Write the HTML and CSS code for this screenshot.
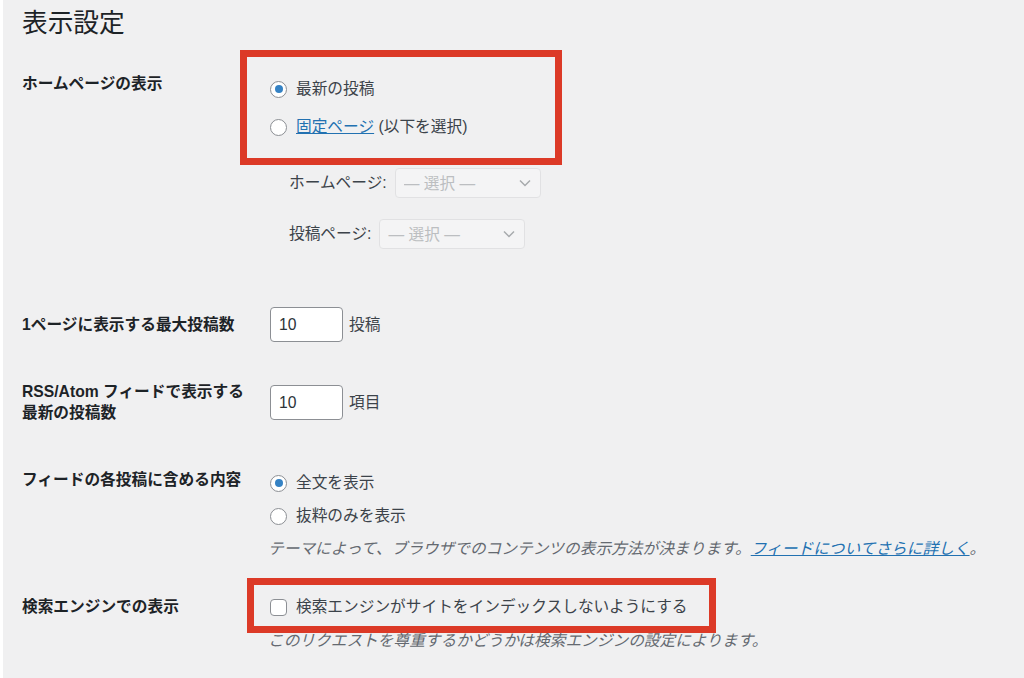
FILE: index.html
```html
<!DOCTYPE html>
<html lang="ja">
<head>
    <meta charset="UTF-8">
    <meta name="viewport" content="width=device-width, initial-scale=1.0">
    <title>表示設定</title>
    <link rel="stylesheet" href="styles.css">
</head>
<body>
    <div class="wrap">
        <h1>表示設定</h1>

        <!-- ホームページの表示 -->
        <div class="form-row row-front">
            <div class="row-label">ホームページの表示</div>
            <div class="row-field">
                <fieldset class="front-choice">
                    <span class="mark-box mark-front"></span>
                    <label class="choice"><input type="radio" name="show_on_front" checked>最新の投稿</label>
                    <label class="choice"><input type="radio" name="show_on_front"><span><a href="#">固定ページ</a> (以下を選択)</span></label>
                </fieldset>
                <ul class="page-pick">
                    <li>
                        <label for="page_on_front">ホームページ:</label>
                        <span class="select-wrap">
                            <select id="page_on_front" disabled><option>— 選択 —</option></select>
                            <svg class="chevron" width="12" height="8" viewBox="0 0 12 8"><path d="M1 1.5l5 5 5-5" fill="none" stroke="#a7aaad" stroke-width="1.5"/></svg>
                        </span>
                    </li>
                    <li>
                        <label for="page_for_posts">投稿ページ:</label>
                        <span class="select-wrap">
                            <select id="page_for_posts" disabled><option>— 選択 —</option></select>
                            <svg class="chevron" width="12" height="8" viewBox="0 0 12 8"><path d="M1 1.5l5 5 5-5" fill="none" stroke="#a7aaad" stroke-width="1.5"/></svg>
                        </span>
                    </li>
                </ul>
            </div>
        </div>

        <!-- 投稿数 -->
        <div class="form-row row-per-page">
            <div class="row-label">1ページに表示する最大投稿数</div>
            <div class="row-field">
                <div class="number-line">
                    <input type="number" class="small-text" value="10"> 投稿
                </div>
            </div>
        </div>

        <div class="form-row row-rss">
            <div class="row-label">RSS/Atom フィードで表示する最新の投稿数</div>
            <div class="row-field">
                <div class="number-line">
                    <input type="number" class="small-text" value="10"> 項目
                </div>
            </div>
        </div>

        <!-- フィード -->
        <div class="form-row row-feed">
            <div class="row-label">フィードの各投稿に含める内容</div>
            <div class="row-field">
                <label class="choice"><input type="radio" name="rss_use_excerpt" checked>全文を表示</label>
                <label class="choice"><input type="radio" name="rss_use_excerpt">抜粋のみを表示</label>
                <p class="description">テーマによって、ブラウザでのコンテンツの表示方法が決まります。<a href="#">フィードについてさらに詳しく</a>。</p>
            </div>
        </div>

        <!-- 検索エンジン -->
        <div class="form-row row-search">
            <div class="row-label">検索エンジンでの表示</div>
            <div class="row-field">
                <span class="mark-box mark-search"></span>
                <label class="choice"><input type="checkbox" name="blog_public">検索エンジンがサイトをインデックスしないようにする</label>
                <p class="description">このリクエストを尊重するかどうかは検索エンジンの設定によります。</p>
            </div>
        </div>
    </div>
</body>
</html>
```

FILE: styles.css
```css
* {
    margin: 0;
    padding: 0;
    box-sizing: border-box;
}

body {
    background-color: #F0F0F1;
    border-left: 3px solid #FFF;
    min-height: 678px;
    font-family: "Liberation Sans", "Noto Sans CJK JP", sans-serif;
    font-size: 15.7px;
    line-height: 22px;
    color: #3C434A;
}

.wrap {
    padding-left: 19px;
}

h1 {
    padding-top: 8px;
    font-size: 25.7px;
    line-height: 30px;
    font-weight: 400;
    color: #1D2327;
}

a {
    color: #2271B1;
    text-decoration: underline;
}

/* Form rows */
.form-row {
    display: flex;
}

.row-label {
    width: 248px;
    flex-shrink: 0;
    padding-right: 14px;
    font-weight: 700;
    color: #1D2327;
}

.row-field {
    position: relative;
    flex: 1;
}

.row-front .row-label { padding-top: 35px; }
.row-front .row-field { padding-top: 40px; padding-bottom: 11px; }

.row-per-page .row-label { padding-top: 54px; }
.row-per-page .row-field { padding-top: 47px; padding-bottom: 8px; }

.row-rss .row-label { padding-top: 31px; line-height: 21px; }
.row-rss .row-field { padding-top: 35px; padding-bottom: 20px; }

.row-feed .row-label { padding-top: 29px; }
.row-feed .row-field { padding-top: 32px; padding-bottom: 5px; }

.row-search .row-label { padding-top: 31px; }
.row-search .row-field { padding-top: 31px; }

/* Radio + checkbox */
fieldset {
    border: none;
}

.front-choice {
    position: relative;
}

.choice {
    display: flex;
    align-items: center;
    height: 22px;
}

.front-choice .choice + .choice {
    margin-top: 16px;
}

.row-feed .choice + .choice {
    margin-top: 11px;
}

input[type="radio"],
input[type="checkbox"] {
    appearance: none;
    -webkit-appearance: none;
    width: 17px;
    height: 17px;
    margin-right: 9px;
    flex-shrink: 0;
    background-color: #FFF;
    border: 1px solid #8C8F94;
    display: grid;
    place-content: center;
}

input[type="radio"] {
    border-radius: 50%;
}

input[type="radio"]:checked::before {
    content: "";
    width: 8px;
    height: 8px;
    border-radius: 50%;
    background-color: #3582C4;
}

input[type="checkbox"] {
    border-radius: 4px;
}

/* Page selects */
.page-pick {
    list-style: none;
    margin-left: 19px;
    margin-top: 30px;
}

.page-pick li {
    display: flex;
    align-items: center;
    gap: 8px;
}

.page-pick li + li {
    margin-top: 21px;
}

.select-wrap {
    position: relative;
    display: block;
}

.select-wrap select {
    appearance: none;
    -webkit-appearance: none;
    width: 146px;
    height: 30px;
    padding: 0 24px 0 8px;
    font-family: inherit;
    font-size: 15.7px;
    color: #A7AAAD;
    background-color: #F6F7F7;
    border: 1px solid #DCDCDE;
    border-radius: 4px;
}

.chevron {
    position: absolute;
    right: 10px;
    top: 11px;
}

/* Number inputs */
.number-line {
    display: flex;
    align-items: center;
    gap: 6px;
}

input.small-text {
    appearance: textfield;
    -moz-appearance: textfield;
    width: 73px;
    height: 35px;
    padding: 0 8px;
    font-family: inherit;
    font-size: 15.7px;
    color: #2C3338;
    background-color: #FFF;
    border: 1px solid #8C8F94;
    border-radius: 4px;
}

input.small-text::-webkit-inner-spin-button,
input.small-text::-webkit-outer-spin-button {
    -webkit-appearance: none;
    margin: 0;
}

.description {
    font-style: italic;
    color: #646970;
    margin-top: 11px;
    margin-left: -2px;
}

.row-search .description {
    margin-top: 12px;
}

/* Red annotation frames */
.mark-box {
    position: absolute;
    border: 7px solid #DC3A27;
    pointer-events: none;
}

.mark-front {
    left: -30px;
    top: -28px;
    width: 322px;
    height: 115px;
}

.mark-search {
    left: -23px;
    top: 13px;
    width: 469px;
    height: 55px;
}
```
